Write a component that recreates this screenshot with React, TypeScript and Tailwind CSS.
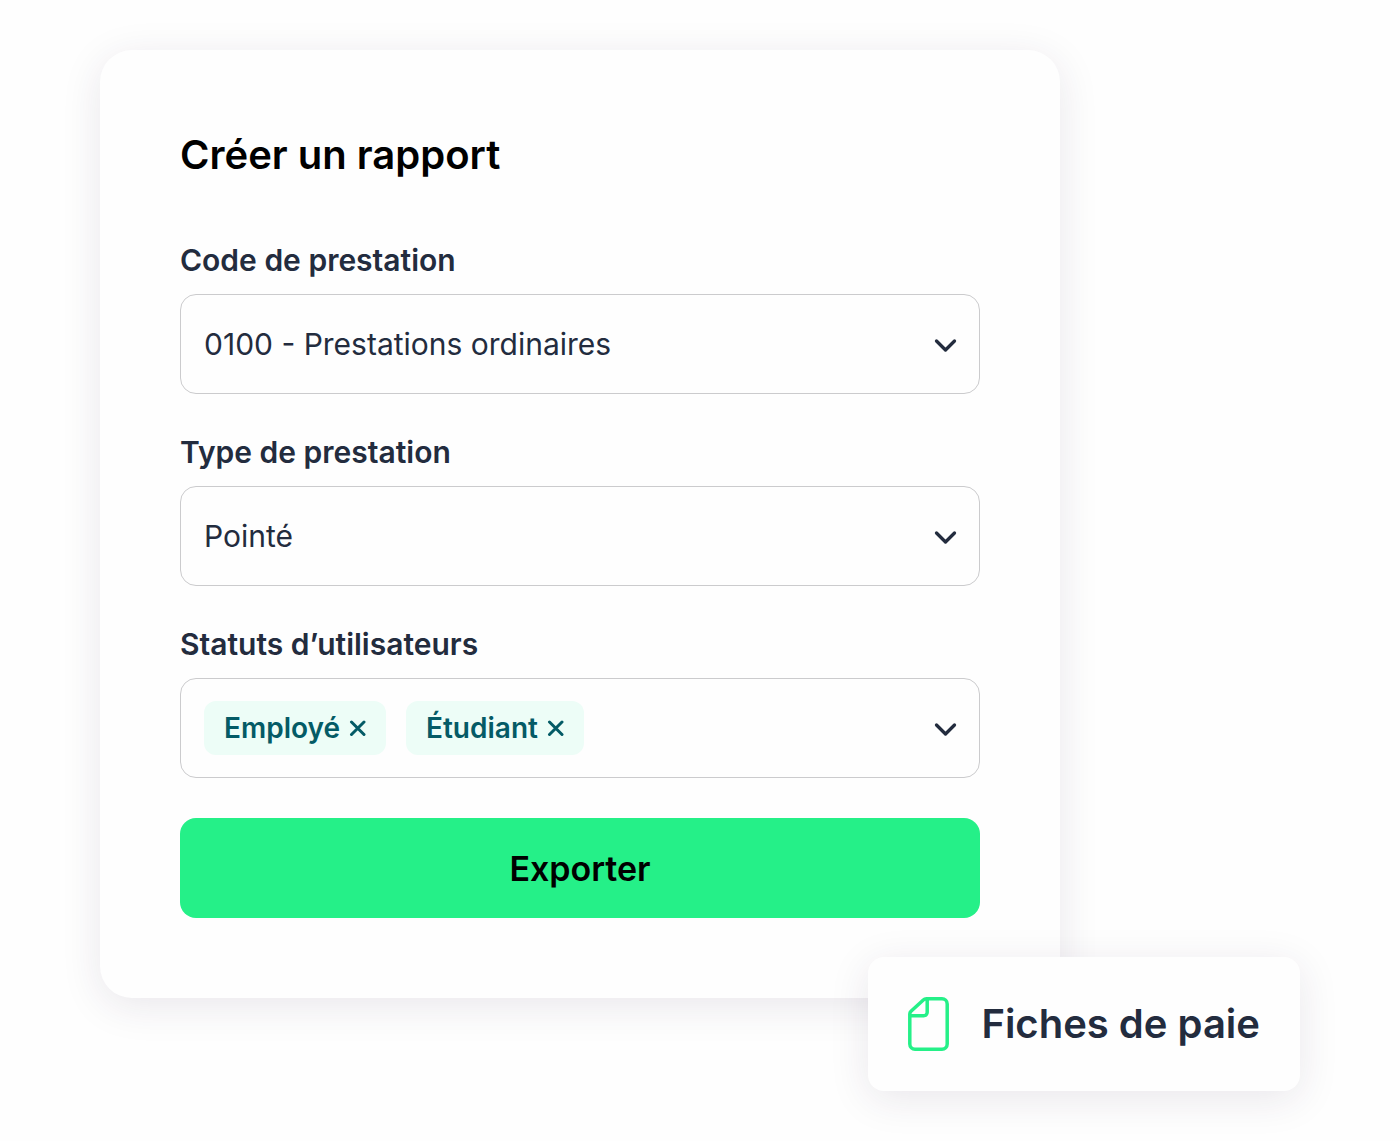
import React, { useState } from 'react';

function Chevron() {
  return (
    <svg className="pointer-events-none col-start-1 row-start-1 mr-[22px] h-6 w-6 self-center justify-self-end text-[#232c3e]" viewBox="0 0 24 24" fill="none" stroke="currentColor" strokeWidth="3.3" strokeLinecap="round" strokeLinejoin="round" aria-hidden="true">
      <path d="M3.5 9 12.5 18 21.5 9" />
    </svg>
  );
}

function SelectField({ id, label, options }: { id: string; label: string; options: string[] }) {
  return (
    <div className="flex flex-col gap-3">
      <label htmlFor={id} className="text-[30px] leading-11 font-semibold text-[#232c3e]">{label}</label>
      <div className="grid h-[100px] rounded-2xl border border-[#cbcbcd]">
        <select id={id} className="col-start-1 row-start-1 w-full appearance-none rounded-2xl bg-transparent px-[23px] text-[30px] text-[#232c3e]">
          {options.map((o) => <option key={o}>{o}</option>)}
        </select>
        <Chevron />
      </div>
    </div>
  );
}

export default function App() {
  const [tags, setTags] = useState(['Employé', 'Étudiant']);
  return (
    <main className="min-h-screen bg-[#fefefe] px-[100px] pt-[50px] pb-12 font-['Inter',sans-serif]">
      <section className="mr-60 rounded-[32px] bg-[#fefefe] p-20 shadow-[0_8px_40px_rgba(50,32,66,0.10)]">
        <h1 className="text-[40px] leading-[50px] font-semibold text-black">Créer un rapport</h1>
        <form className="mt-[58px] flex flex-col gap-9" onSubmit={(e) => e.preventDefault()}>
          <SelectField id="code" label="Code de prestation" options={['0100 - Prestations ordinaires']} />
          <SelectField id="type" label="Type de prestation" options={['Pointé']} />
          <div className="flex flex-col gap-3" role="group" aria-labelledby="status-label">
            <span id="status-label" className="text-[30px] leading-11 font-semibold text-[#232c3e]">Statuts d’utilisateurs</span>
            <div className="grid h-[100px] rounded-2xl border border-[#cbcbcd]">
              <div className="col-start-1 row-start-1 flex items-center gap-5 px-[23px]">
                {tags.map((t) => (
                  <span key={t} className="flex h-[54px] items-center gap-2 rounded-xl bg-[#edfdf7] px-5 text-[28px] font-semibold text-[#045b66]">
                    {t}
                    <button type="button" aria-label={`Retirer ${t}`} onClick={() => setTags(tags.filter((x) => x !== t))}>
                      <svg className="h-[18px] w-[18px]" viewBox="0 0 18 18" fill="none" stroke="currentColor" strokeWidth="3" strokeLinecap="round" aria-hidden="true">
                        <path d="M3.5 3 16 15.5M16 3 3.5 15.5" />
                      </svg>
                    </button>
                  </span>
                ))}
              </div>
              <Chevron />
            </div>
          </div>
          <button type="submit" className="mt-1 h-[100px] w-full rounded-2xl bg-[#25f088] text-[34px] font-semibold text-black">Exporter</button>
        </form>
      </section>
      <aside className="relative -mt-[41px] ml-auto flex h-[134px] w-fit items-center gap-8 rounded-2xl bg-[#fefefe] px-10 shadow-[0_8px_40px_rgba(50,32,66,0.10)]">
        <svg className="h-[54px] w-[41px]" viewBox="0 0 41 54" fill="none" stroke="#25f088" strokeWidth="3.5" strokeLinejoin="round" aria-hidden="true">
          <path d="M18.5 1.8H34A5.2 5.2 0 0 1 39.2 7V47A5.2 5.2 0 0 1 34 52.2H7A5.2 5.2 0 0 1 1.8 47V17Q1.8 15.5 3 14.3L15.3 3Q16.5 1.8 18.5 1.8ZM19.2 2V15.2A3.5 3.5 0 0 1 15.7 18.7H2" />
        </svg>
        <span className="text-[40px] font-semibold text-[#232c3e]">Fiches de paie</span>
      </aside>
    </main>
  );
}
